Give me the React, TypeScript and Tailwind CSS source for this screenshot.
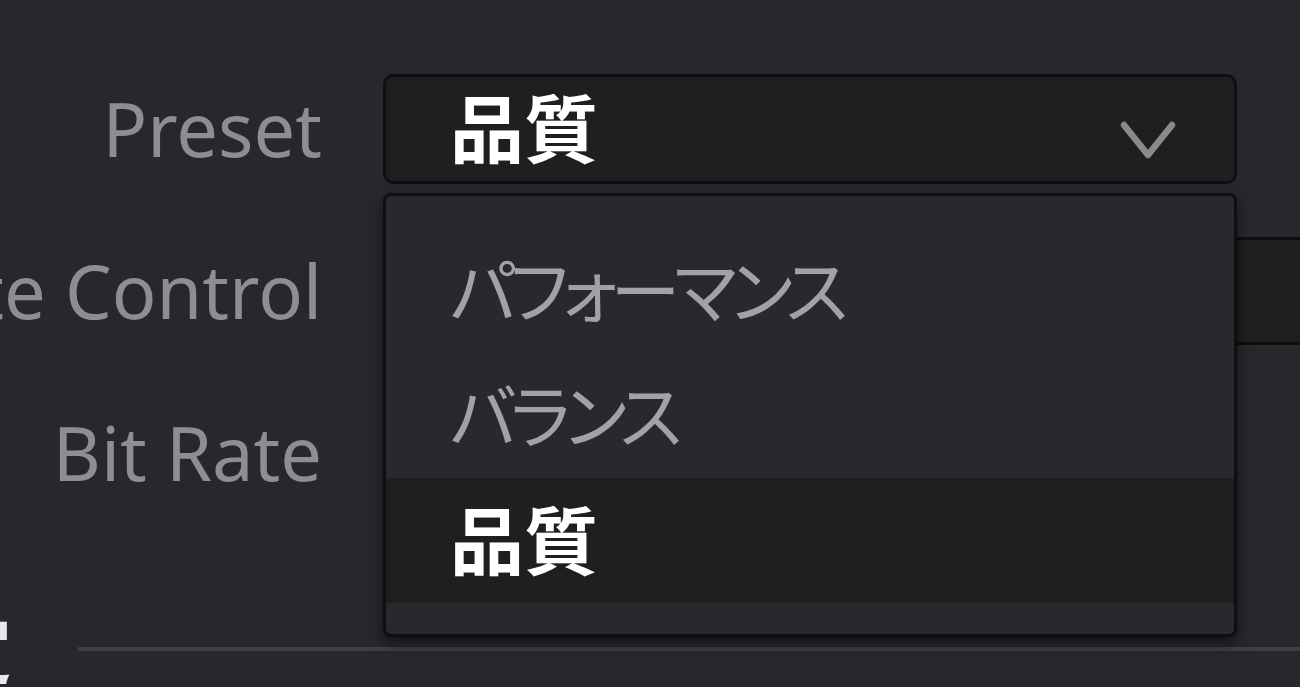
import { useState } from 'react';

const presets = ['パフォーマンス', 'バランス', '品質'];

function Chevron() {
    return (
        <svg width="56" height="44" viewBox="0 0 56 44" fill="none" className="shrink-0 translate-y-[10px]">
            <polyline points="4,8 28,38 52,8" stroke="#8a8a8c" strokeWidth="6.5" strokeLinecap="round" strokeLinejoin="round" />
        </svg>
    );
}

// 右寄せのラベル列。長いラベルは左にはみ出す
function Label({ text }: { text: string }) {
    return (
        <div className="w-[322px] shrink-0 flex justify-end">
            <span className="whitespace-nowrap text-[74px] leading-none text-[#8c8e94]">{text}</span>
        </div>
    );
}

export default function App() {
    const [preset, setPreset] = useState('品質');
    const [open, setOpen] = useState(true);

    return (
        <main className="h-[687px] w-full overflow-hidden bg-[#28272e] font-['Noto_Sans','Noto_Sans_CJK_JP',sans-serif] [font-feature-settings:'palt']">
            <div className="flex flex-col gap-[53px] pt-[74px]">
                {/* Preset */}
                <div className="flex items-center h-[110px]">
                    <Label text="Preset" />
                    <div className="relative ml-[61px] w-[854px] h-[110px] shrink-0">
                        <button
                            onClick={() => setOpen(!open)}
                            className="w-full h-full flex items-center justify-between pl-[64px] pr-[58px] bg-[#1f1f1f] border-[3px] border-[#0f0f10] rounded-[10px]"
                        >
                            <span className="text-[74px] leading-none font-bold text-white">{preset}</span>
                            <Chevron />
                        </button>
                        {open && (
                            <ul className="absolute left-0 top-[119px] z-10 w-full h-[444px] pt-[32px] bg-[#28282f] border-[3px] border-[#0f0f10] rounded-[8px] shadow-[0_6px_14px_rgba(0,0,0,0.55)]">
                                {presets.map((p) => (
                                    <li
                                        key={p}
                                        onClick={() => { setPreset(p); setOpen(false); }}
                                        className={
                                            p === preset
                                                ? 'h-[125px] flex items-center pl-[64px] bg-[#1f1f1f] text-white font-bold text-[74px] leading-none'
                                                : 'h-[125px] flex items-center pl-[64px] text-[#a2a2a5] text-[70px] leading-none tracking-[-6px]'
                                        }
                                    >
                                        {p}
                                    </li>
                                ))}
                            </ul>
                        )}
                    </div>
                </div>

                {/* Rate Control */}
                <div className="flex items-center h-[108px]">
                    <Label text="Rate Control" />
                    <div className="ml-[61px] w-[1000px] h-[108px] shrink-0 bg-[#1f1f1f] border-[3px] border-[#0f0f10] rounded-[10px]" />
                </div>

                {/* Bit Rate */}
                <div className="flex items-center h-[110px]">
                    <Label text="Bit Rate" />
                    <div className="ml-[61px] w-[600px] h-[110px] shrink-0 bg-[#1f1f1f] border-[3px] border-[#0f0f10] rounded-[10px]" />
                </div>
            </div>

            {/* 次のセクション見出し */}
            <div className="flex items-center mt-[89px] h-[104px]">
                <div className="w-[12px] shrink-0 flex justify-end">
                    <span className="whitespace-nowrap text-[74px] leading-none font-bold text-[#e8e8ea]">エンコード設定</span>
                </div>
                <div className="ml-[66px] flex-1 h-[4px] bg-[#3e3e44]" />
            </div>
        </main>
    );
}
